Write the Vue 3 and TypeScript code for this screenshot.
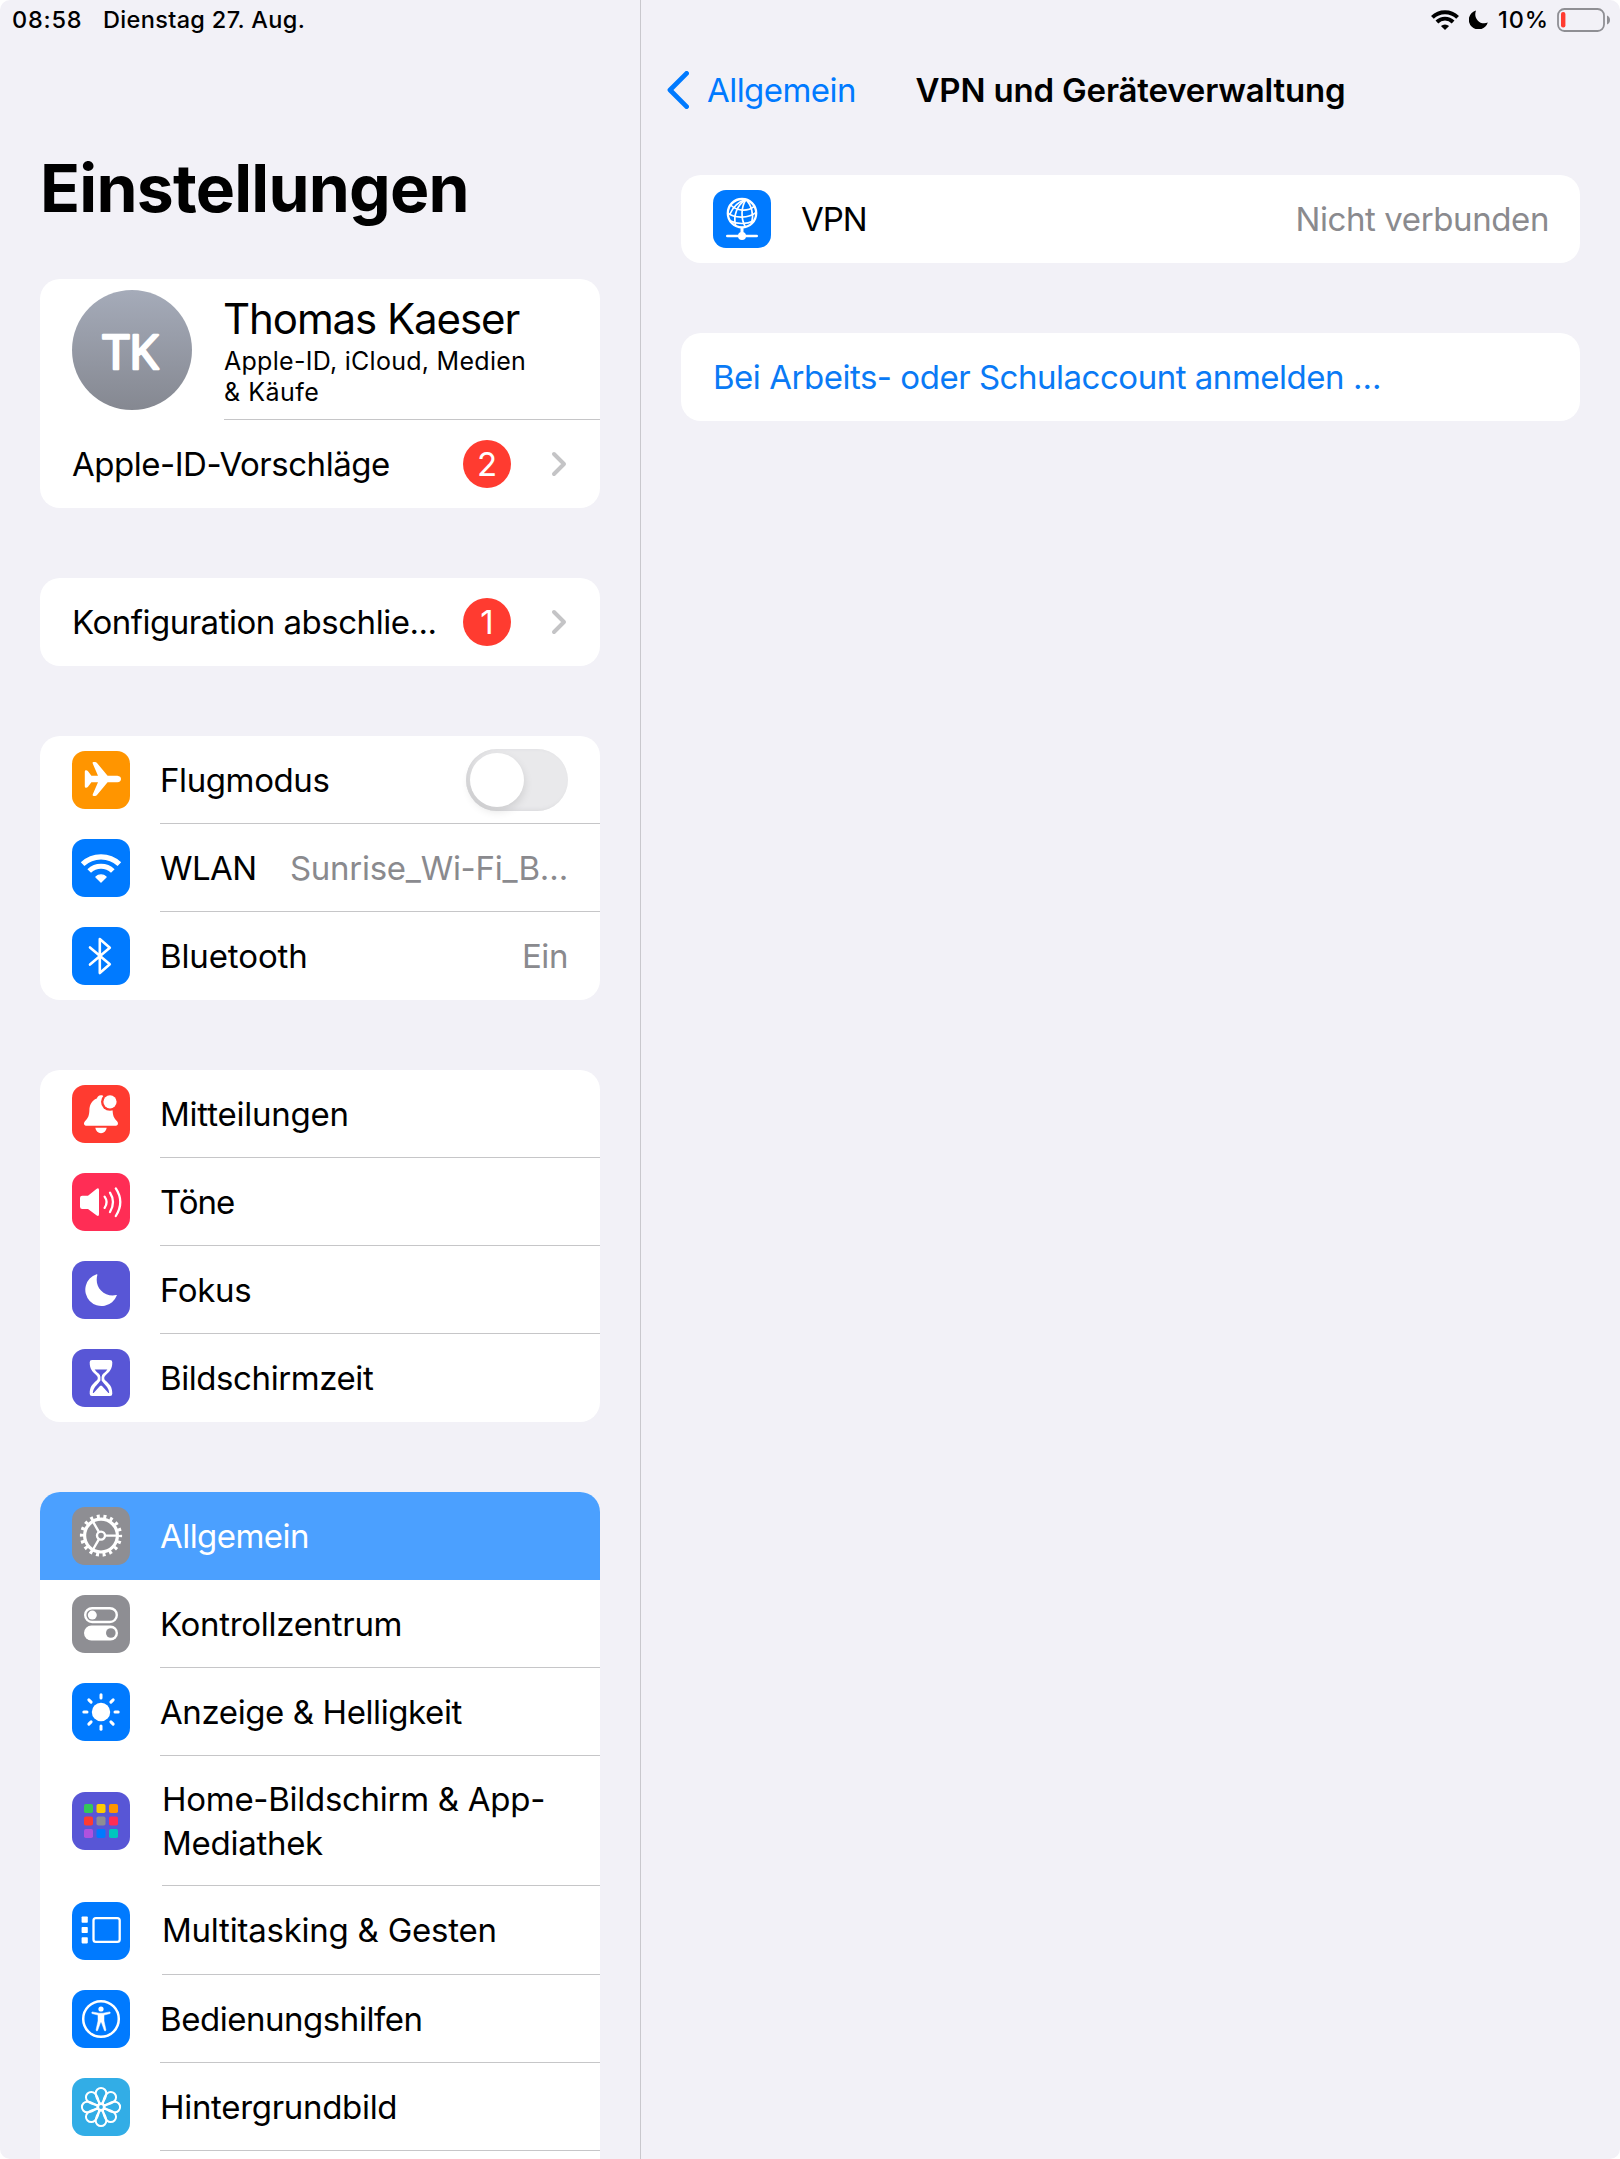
<script setup lang="ts">
interface Row {
  id: string
  icon: string
  color: string
  label: string
  track: number
  value?: string
  valueTrack?: number
  toggle?: boolean
  selected?: boolean
  size?: 'tall' | 'wide'
}

const groups: Row[][] = [
  [
    { id: 'flight', icon: 'plane', color: '#ff9500', label: 'Flugmodus', track: -0.4, toggle: true },
    { id: 'wlan', icon: 'wifi', color: '#007aff', label: 'WLAN', track: -0.6, value: 'Sunrise_Wi-Fi_B…', valueTrack: -0.26 },
    { id: 'bt', icon: 'bluetooth', color: '#007aff', label: 'Bluetooth', track: -0.12, value: 'Ein', valueTrack: -0.41 },
  ],
  [
    { id: 'notif', icon: 'bell', color: '#ff3b30', label: 'Mitteilungen', track: -0.22 },
    { id: 'sounds', icon: 'speaker', color: '#ff2d55', label: 'Töne', track: -1 },
    { id: 'focus', icon: 'moon', color: '#5856d6', label: 'Fokus', track: -0.35 },
    { id: 'time', icon: 'hourglass', color: '#5856d6', label: 'Bildschirmzeit', track: -0.42 },
  ],
  [
    { id: 'general', icon: 'gear', color: '#8e8e93', label: 'Allgemein', track: -0.55, selected: true },
    { id: 'control', icon: 'switches', color: '#8e8e93', label: 'Kontrollzentrum', track: -0.3 },
    { id: 'display', icon: 'sun', color: '#007aff', label: 'Anzeige & Helligkeit', track: -0.4 },
    { id: 'home', icon: 'apps', color: '#5856d6', label: 'Home-Bildschirm & App-Mediathek', track: -0.28, size: 'tall' },
    { id: 'multi', icon: 'multi', color: '#007aff', label: 'Multitasking & Gesten', track: -0.23, size: 'wide' },
    { id: 'access', icon: 'person', color: '#007aff', label: 'Bedienungshilfen', track: -0.46 },
    { id: 'wallpaper', icon: 'flower', color: '#32ade6', label: 'Hintergrundbild', track: -0.31 },
  ],
]

const notices = [
  { label: 'Konfiguration abschlie...', track: -0.49, count: 1 },
]

const appTiles = ['#34c759', '#ffcc00', '#ff9500', '#ff3b30', '#8e8e93', '#ff2d55', '#af52de', '#007aff', '#00c7be']
const eighths = [0, 45, 90, 135, 180, 225, 270, 315]
</script>

<template>
  <div class="screen">
    <aside class="sidebar">
      <div class="status">
        <span class="clock">08:58</span>
        <span class="date">Dienstag 27. Aug.</span>
      </div>
      <h1>Einstellungen</h1>

      <section class="card">
        <div class="profile">
          <svg class="avatar" viewBox="0 0 120 120">
            <defs>
              <linearGradient id="avatarFill" x1="0" y1="0" x2="0" y2="1">
                <stop offset="0" stop-color="#a5abb9" />
                <stop offset="1" stop-color="#858891" />
              </linearGradient>
            </defs>
            <circle cx="60" cy="60" r="60" fill="url(#avatarFill)" />
            <text class="initials" x="58.6" y="78.6" text-anchor="middle">TK</text>
          </svg>
          <div class="who">
            <div class="name">Thomas Kaeser</div>
            <div class="sub"><span>Apple-ID, iCloud, Medien</span><span class="sub2">&amp; Käufe</span></div>
          </div>
        </div>
        <div class="notice">
          <span class="notice-label apple">Apple-ID-Vorschläge</span>
          <span class="badge">2</span>
          <svg class="chev" viewBox="0 0 14 24"><path d="M2 2 12 12 2 22" /></svg>
        </div>
      </section>

      <section v-for="n in notices" :key="n.label" class="card">
        <div class="notice">
          <span class="notice-label" :style="{ letterSpacing: n.track + 'px' }">{{ n.label }}</span>
          <span class="badge">{{ n.count }}</span>
          <svg class="chev" viewBox="0 0 14 24"><path d="M2 2 12 12 2 22" /></svg>
        </div>
      </section>

      <section v-for="(g, gi) in groups" :key="gi" class="card" :class="{ open: gi === 2 }">
        <div v-for="r in g" :key="r.id" class="row" :class="[r.size, { selected: r.selected }]">
          <svg class="icon" viewBox="0 0 58 58">
            <rect width="58" height="58" rx="13" :fill="r.color" />
            <path
              v-if="r.icon === 'plane'"
              fill="#fff"
              d="M45.4 24.7H35.6L25 12Q24.2 11 23 11H21.6Q20.2 11 20.7 12.4L26 24.7H19.4L16 20.2Q15.2 19.2 14 19.2Q12.8 19.2 12.8 20.4V35.6Q12.8 36.8 14 36.8Q15.2 36.8 16 35.8L19.4 31.3H26L20.7 43.6Q20.2 45 21.6 45H23Q24.2 45 25 44L35.6 31.3H45.4Q49 30.8 49 28Q49 25.2 45.4 24.7Z"
            />
            <g v-else-if="r.icon === 'wifi'" fill="none" stroke="#fff" stroke-width="5.2">
              <path d="M10.6 25.2A26.8 26.8 0 0 1 47.4 25.2" />
              <path d="M17.2 32A17 17 0 0 1 40.8 32" />
              <path d="M29 43.2 23.9 38A7.4 7.4 0 0 1 34.1 38Z" fill="#fff" stroke-width="1.2" stroke-linejoin="round" />
            </g>
            <path
              v-else-if="r.icon === 'bluetooth'"
              fill="none"
              stroke="#fff"
              stroke-width="2.6"
              stroke-linecap="round"
              stroke-linejoin="round"
              d="M18 20.4 37.8 37.2 27.8 46V12L37.8 20.8 18 37.6"
            />
            <g v-else-if="r.icon === 'bell'" fill="#fff">
              <path d="M29 10.3C26.4 10.3 25.6 11.8 24.8 13.4C19.6 15.4 17.6 20 17.4 25C17.2 31 16 33 13 36.2C11.2 38.3 12 40.7 14.6 40.7H43.4C46 40.7 46.8 38.3 45 36.2C42 33 40.8 31 40.6 25V16H33.2C32.4 11.8 31.6 10.3 29 10.3Z" />
              <path d="M23.3 42.8H34.7Q33.6 48.2 29 48.2Q24.4 48.2 23.3 42.8Z" />
              <circle cx="38" cy="16.8" r="9" :fill="r.color" />
              <circle cx="38" cy="16.8" r="6.6" />
            </g>
            <g v-else-if="r.icon === 'speaker'" fill="none" stroke="#fff" stroke-width="2.3" stroke-linecap="round">
              <path fill="#fff" stroke="none" d="M10.2 22.7H16L24.4 15.9Q27 14.2 27 17V41.2Q27 44 24.4 42.3L16 36H10.2Q8 36 8 33.8V24.9Q8 22.7 10.2 22.7Z" />
              <path d="M32.6 23.6Q36.6 29 32.6 34.8" />
              <path d="M38 19.6Q44 29 38 39" />
              <path d="M43.8 15.4Q52.8 29 43.8 43" />
            </g>
            <path
              v-else-if="r.icon === 'moon'"
              fill="#fff"
              d="M24.6 13.2A16.3 16.3 0 1 0 44.8 34.6Q45.2 34 44.2 34.1C39 35.4 33 33.8 29 29.6C24.9 25 23.8 19.4 25.4 13.8Q25.5 12.9 24.6 13.2Z"
            />
            <g v-else-if="r.icon === 'hourglass'">
              <path fill="#fff" d="M20 11H38Q40.3 11 40.3 13.2C40.3 20.4 37.6 22.6 33.4 26.4Q31 29 33.4 31.6C37.6 35.4 40.3 37.6 40.3 44.8Q40.3 47 38 47H20Q17.7 47 17.7 44.8C17.7 37.6 20.4 35.4 24.6 31.6Q27 29 24.6 26.4C20.4 22.6 17.7 20.4 17.7 13.2Q17.7 11 20 11Z" />
              <path :fill="r.color" d="M22.6 20.6H35.4Q34 22.6 31.4 24.6Q29.8 26 29.6 28V31.4Q31.4 34 35 38Q36.8 40.4 37.2 44H36.4L29.8 36.8H28.2L21.6 44H20.8Q21.2 40.4 23 38Q26.6 34 28.4 31.4V28Q28.2 26 26.6 24.6Q24 22.6 22.6 20.6Z" />
            </g>
            <g v-else-if="r.icon === 'gear'" fill="none" stroke="#fff" transform="translate(29 28.6)">
              <circle r="19.2" stroke-width="3.8" stroke-dasharray="3 3.702" stroke-dashoffset="1.5" />
              <circle r="16.4" stroke-width="3.2" />
              <circle r="4" stroke-width="2.4" />
              <path stroke-width="2.4" d="M4.6 0H16M-2.3 4L-8 13.9M-2.3 -4L-8 -13.9" />
            </g>
            <g v-else-if="r.icon === 'switches'">
              <rect x="13.2" y="13.2" width="31.6" height="13.8" rx="6.9" fill="none" stroke="#fff" stroke-width="2.4" />
              <circle cx="20.3" cy="20.1" r="4.5" fill="#fff" />
              <rect x="12" y="30.6" width="34" height="14.8" rx="7.4" fill="#fff" />
              <circle cx="38.8" cy="38" r="4.8" :fill="r.color" />
            </g>
            <g v-else-if="r.icon === 'sun'" stroke="#fff" stroke-width="3" stroke-linecap="round">
              <circle cx="29" cy="29" r="9.2" fill="#fff" stroke="none" />
              <path v-for="a in eighths" :key="a" d="M29 15V11.8" :transform="`rotate(${a} 29 29)`" />
            </g>
            <g v-else-if="r.icon === 'apps'">
              <rect
                v-for="(c, i) in appTiles"
                :key="i"
                :x="12 + (i % 3) * 12.5"
                :y="12 + Math.floor(i / 3) * 12.5"
                width="9"
                height="9"
                rx="1.8"
                :fill="c"
              />
            </g>
            <g v-else-if="r.icon === 'multi'" fill="#fff">
              <rect x="9.6" y="14.5" width="6.2" height="6.2" rx="0.8" />
              <rect x="9.6" y="24.9" width="6.2" height="6.2" rx="0.8" />
              <rect x="9.6" y="35.2" width="6.2" height="6.2" rx="0.8" />
              <rect x="21.5" y="16.1" width="26.2" height="23.8" rx="2.4" fill="none" stroke="#fff" stroke-width="2.3" />
            </g>
            <g v-else-if="r.icon === 'person'">
              <circle cx="29" cy="29" r="17.8" fill="none" stroke="#fff" stroke-width="2.5" />
              <circle cx="29" cy="19" r="2.6" fill="#fff" />
              <path
                fill="#fff"
                stroke="#fff"
                stroke-width="0.5"
                stroke-linejoin="round"
                d="M20.2 21.9 27 23.2H31L37.8 21.9Q38.8 22.9 38 23.5L32 25.1V31L34 40.2Q33.2 41.4 32.4 40.6L29.4 32.2H28.6L25.6 40.6Q24.8 41.4 24 40.2L26 31V25.1L20 23.5Q19.2 22.9 20.2 21.9Z"
              />
            </g>
            <g v-else-if="r.icon === 'flower'" fill="none" stroke="#fff" stroke-width="2" stroke-linejoin="round">
              <path
                v-for="a in eighths"
                :key="a"
                d="M29 26.4C26 23 23.7 19.4 23.7 15.2A5.3 5.3 0 0 1 34.3 15.2C34.3 19.4 32 23 29 26.4Z"
                :transform="`rotate(${a} 29 29)`"
              />
              <circle cx="29" cy="29" r="2.9" :fill="r.color" />
            </g>
          </svg>
          <div class="body">
            <span class="label" :style="{ letterSpacing: r.track + 'px' }">{{ r.label }}</span>
            <span v-if="r.value" class="value" :style="{ letterSpacing: r.valueTrack + 'px' }">{{ r.value }}</span>
            <span v-if="r.toggle" class="toggle"><i /></span>
          </div>
        </div>
      </section>
    </aside>

    <main class="pane">
      <div class="status right">
        <svg class="s-wifi" viewBox="0 0 28 20">
          <g fill="none" stroke="#000" stroke-width="3.9">
            <path d="M1.4 7.4A18 18 0 0 1 26.6 7.4" />
            <path d="M5.9 12A11.5 11.5 0 0 1 22.1 12" />
          </g>
          <path d="M14 20 9.9 16A6 6 0 0 1 18.1 16Z" />
        </svg>
        <svg class="s-moon" viewBox="0 0 19 19">
          <path d="M7 .4A9.7 9.7 0 1 0 18.8 12.6C15 14.2 11 13 8.7 10.4C6.2 7.5 5.6 4 7 .4Z" />
        </svg>
        <span class="percent">10%</span>
        <svg class="s-batt" viewBox="0 0 54 24">
          <rect x="1" y="1" width="46" height="22" rx="6.4" fill="none" stroke="#8f8f94" stroke-width="1.8" />
          <path d="M50 7.4Q53 8.6 53 12T50 16.6Z" fill="#8f8f94" />
          <rect x="4" y="4" width="4.4" height="15.4" rx="2" fill="#ff3b30" />
        </svg>
      </div>

      <header class="nav">
        <a class="back">
          <svg viewBox="0 0 22 38"><path d="M19.6 2.4 3 19 19.6 35.6" /></svg>
          <span>Allgemein</span>
        </a>
        <h2>VPN und Geräteverwaltung</h2>
      </header>

      <section class="card">
        <div class="row">
          <svg class="icon" viewBox="0 0 58 58">
            <rect width="58" height="58" rx="13" fill="#007aff" />
            <g fill="none" stroke="#fff" stroke-width="1.7" stroke-linecap="round">
              <circle cx="29" cy="23.2" r="14.2" stroke-width="2.3" />
              <path d="M32.5 9.6C25 12 20 17 17 24" />
              <path d="M33 9.6C24 15 20 26 22.6 35.6" />
              <path d="M33 9.6C28 17 27.6 29 32.4 37" />
              <path d="M33 9.6C38.6 15 41 25 38.6 33" />
              <path d="M17.6 15C24 21 34 22 41.4 16.4" />
              <path d="M15 23.2C21 28.4 36 28.6 43 22.4" />
              <path d="M17.6 31C24 34.4 34 34.2 40.4 31" />
              <path d="M29 38V43" stroke-width="3" />
              <path d="M14.3 46H43.7" stroke-width="2.6" />
            </g>
            <circle cx="29" cy="46" r="4" fill="#fff" />
          </svg>
          <div class="body">
            <span class="label vpn">VPN</span>
            <span class="value conn">Nicht verbunden</span>
          </div>
        </div>
      </section>

      <section class="card">
        <div class="signin">Bei Arbeits- oder Schulaccount anmelden …</div>
      </section>
    </main>
  </div>
</template>

<style>
body {
  background: #fff;
}
</style>

<style scoped>
.screen {
  display: grid;
  grid-template-columns: 640px 1fr;
  width: 1620px;
  height: 2159px;
  overflow: hidden;
  border-radius: 10px;
  background: #f2f1f7;
  color: #000;
  font-family: Inter, "Liberation Sans", sans-serif;
  font-size: 33px;
  line-height: 44px;
}
.sidebar {
  display: flex;
  flex-direction: column;
  padding: 0 40px;
  min-width: 0;
}
.pane {
  border-left: 1px solid #c9c8cd;
  padding: 0 40px;
}
.status {
  display: flex;
  align-items: center;
  height: 39px;
  margin: 0 -28px;
  font-size: 23.5px;
  line-height: 39px;
  font-weight: 500;
  white-space: nowrap;
}
.clock {
  width: 91px;
  letter-spacing: 0.77px;
}
.date {
  letter-spacing: 0.34px;
}
.status.right {
  justify-content: flex-end;
  margin: 0 -31px;
}
.s-wifi {
  width: 28px;
  height: 20px;
  margin-right: 10px;
}
.s-moon {
  width: 19px;
  height: 19px;
  margin-right: 10px;
}
.percent {
  width: 59px;
  letter-spacing: 0.9px;
}
.s-batt {
  width: 54px;
  height: 24px;
}
h1 {
  margin: 109px 0 51px;
  font-size: 66px;
  line-height: 80px;
  font-weight: 700;
  letter-spacing: -0.78px;
}
.card {
  flex: none;
  margin-bottom: 70px;
  border-radius: 20px;
  background: #fff;
  overflow: hidden;
}
.card.open {
  padding-bottom: 88px;
}
.profile {
  display: flex;
  height: 141px;
  padding-left: 32px;
}
.avatar {
  width: 120px;
  height: 120px;
  margin: 11px 32px 0 0;
}
.initials {
  fill: #fff;
  stroke: #fff;
  stroke-width: 2.5px;
  stroke-linejoin: round;
  font: 400 48px "Open Sans", sans-serif;
}
.who {
  flex: 1;
  padding-top: 15px;
  box-shadow: inset 0 -1px #c6c6c8;
}
.name {
  margin-left: -1px;
  font-size: 42px;
  line-height: 50px;
  letter-spacing: -1.08px;
}
.sub {
  display: flex;
  flex-direction: column;
  margin-top: 2px;
  font-size: 25px;
  line-height: 31px;
  letter-spacing: 0.28px;
}
.sub2 {
  letter-spacing: 0.5px;
}
.notice {
  display: flex;
  align-items: center;
  height: 88px;
  padding: 0 34px 0 32px;
}
.notice-label {
  flex: 1;
  white-space: nowrap;
}
.apple {
  letter-spacing: -0.48px;
}
.badge {
  width: 48px;
  height: 48px;
  margin-right: 41px;
  border-radius: 50%;
  background: #ff3b30;
  color: #fff;
  line-height: 48px;
  text-align: center;
}
.chev {
  width: 14px;
  height: 24px;
  overflow: visible;
}
.chev path {
  fill: none;
  stroke: #c4c4c6;
  stroke-width: 4px;
  stroke-linecap: round;
  stroke-linejoin: round;
}
.row {
  display: flex;
  align-items: center;
  height: 88px;
  padding-left: 32px;
}
.icon {
  flex: none;
  width: 58px;
  height: 58px;
  margin-right: 30px;
}
.body {
  display: flex;
  align-items: center;
  flex: 1;
  min-width: 0;
  height: 100%;
  padding-right: 32px;
  box-shadow: inset 0 -1px #c6c6c8;
}
.card:not(.open) .row:last-child .body,
.selected .body {
  box-shadow: none;
}
.label {
  white-space: nowrap;
}
.value {
  margin-left: auto;
  color: #8a8a8e;
  white-space: nowrap;
}
.tall {
  height: 130px;
}
.wide {
  height: 89px;
}
.tall .icon,
.wide .icon {
  margin-right: 32px;
}
.tall .label {
  white-space: normal;
}
.wide .label {
  margin-bottom: 1px;
}
.selected {
  background: #4ba0ff;
  color: #fff;
}
.toggle {
  width: 102px;
  height: 62px;
  margin-left: auto;
  border-radius: 31px;
  background: #e9e9eb;
  box-shadow: inset 3px -1px 4px #d8d8da;
}
.toggle i {
  display: block;
  width: 54px;
  height: 54px;
  margin: 4px;
  border-radius: 50%;
  background: #fff;
  box-shadow: 0 4px 10px rgba(0, 0, 0, 0.12);
}
.nav {
  display: grid;
  grid-template-columns: 1fr auto 1fr;
  align-items: center;
  height: 60px;
  margin: 21px 0 55px;
}
.back {
  display: flex;
  align-items: center;
  margin-left: -14px;
  color: #007aff;
  letter-spacing: -0.55px;
}
.back svg {
  width: 22px;
  height: 38px;
  margin-right: 18px;
}
.back path {
  fill: none;
  stroke: #007aff;
  stroke-width: 4.8px;
  stroke-linecap: round;
  stroke-linejoin: round;
}
h2 {
  margin: 0;
  font-size: 33px;
  line-height: 44px;
  font-weight: 600;
  letter-spacing: -0.17px;
}
.vpn {
  letter-spacing: -1px;
}
.conn {
  margin-right: -1px;
  letter-spacing: -0.4px;
}
.signin {
  height: 88px;
  padding-left: 32px;
  color: #0a7af5;
  line-height: 88px;
  letter-spacing: -0.48px;
}
</style>
